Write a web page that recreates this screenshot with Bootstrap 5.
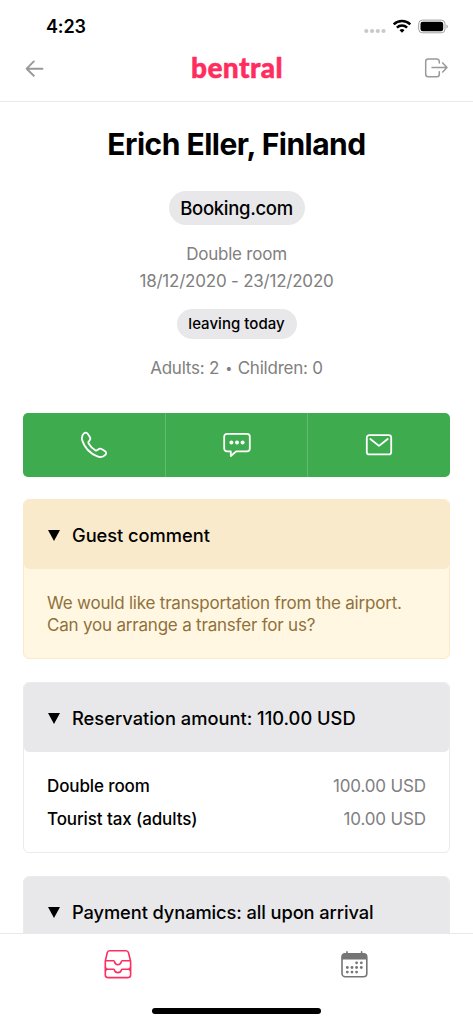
<!DOCTYPE html>
<html lang="en">
<head>
<meta charset="utf-8">
<meta name="viewport" content="width=device-width, initial-scale=1">
<title>bentral</title>
<link href="https://cdn.jsdelivr.net/npm/bootstrap@5.3.0/dist/css/bootstrap.min.css" rel="stylesheet">
<style>
  body { font-family: Inter, "Liberation Sans", sans-serif; color: #000; background: #fff; font-size: 17px; line-height: 27px; letter-spacing: -.22px; }
  svg { display: block; flex: none; }
  .status-bar { height: 50px; padding: 3px 24px 0 46px; }
  .clock { font-size: 18px; font-weight: 600; letter-spacing: -.15px; }
  .app-header { height: 52px; padding: 0 25px 15px; border-bottom: 1px solid #e9e9eb; }
  .brand { font-family: Lato, sans-serif; font-weight: 900; font-size: 28px; color: #ff2d5f; letter-spacing: .4px; line-height: 34px; padding: 0 0 3px 5px; -webkit-text-stroke: .5px #ff2d5f; }
  .guest-name { font-size: 30px; font-weight: 700; line-height: 36px; letter-spacing: -.52px; margin: 24px 0 29px; }
  .pill { background: #e8e8ea; border-radius: 18px; font-weight: 500; }
  .pill-channel { font-size: 18.5px; line-height: 34px; width: 136px; letter-spacing: -.3px; margin-bottom: 16px; }
  .pill-stay { font-size: 15px; line-height: 30px; width: 120px; letter-spacing: .03px; margin: 14px 0 16px; }
  .soft { color: #808080; }
  .dot { display: inline-block; transform: scale(.75); }
  .contact-bar { height: 64px; background: #3fab4f; border-radius: 5px; margin: 31px 23px 0; }
  .contact-bar a + a { border-left: 1px solid #62bb6f; }
  .panel { border: 1px solid #ebebed; border-radius: 6px; margin: 23px 23px 0; }
  .panel-top { height: 69px; background: #e8e8ea; border-radius: 5px; padding: 1px 0 0 24px; gap: 12px; font-size: 18.3px; font-weight: 500; letter-spacing: -.1px; }
  .panel-top.with-total { letter-spacing: 0; }
  .panel-note { border-color: #fbe9c8; background: #fff7e2; margin-top: 22px; }
  .panel-note .panel-top { background: #faeacc; letter-spacing: -.04px; }
  .note-text { color: #8f713c; line-height: 22px; padding: 23px 23px 22px; letter-spacing: -.2px; }
  .amounts { padding: 18px 23px 16px; line-height: 33px; }
  .amounts .label { font-weight: 500; letter-spacing: -.11px; }
  .amounts .soft { letter-spacing: -.14px; }
  .tabs-bottom { height: 91px; border-top: 1px solid #e9e9eb; background: #fff; }
  .tab-row { height: 60px; }
  .home-line { width: 169px; height: 6px; border-radius: 3px; background: #000; margin-top: 14px; }
</style>
</head>
<body>
<div class="vh-100 d-flex flex-column overflow-hidden">
  <div class="status-bar d-flex align-items-center justify-content-between flex-shrink-0">
    <span class="clock">4:23</span>
    <svg width="85" height="16" viewBox="0 0 85 16">
      <g fill="#c9c9c9"><circle cx="2.3" cy="12" r="2.1"/><circle cx="8.1" cy="12" r="2.1"/><circle cx="13.8" cy="12" r="2.1"/><circle cx="19.5" cy="12" r="2.1"/></g>
      <g fill="none" stroke="#000" stroke-width="2.5"><path d="M29.7 5.300a12.300 12.300 0 0 1 16.600 0"/><path d="M32.900 8.600a7.400 7.400 0 0 1 10.200 0"/></g>
      <path d="M35.500 11.200a3.600 3.600 0 0 1 5 0L38 13.800z"/>
      <rect x="54.700" y="1.100" width="26.300" height="12.700" rx="3.700" fill="none" stroke="#a0a0a0"/>
      <rect x="56.500" y="2.800" width="22.700" height="9.400" rx="2.200"/>
      <path d="M82.500 5.400c1.700.6 1.700 3.500 0 4.200z" fill="#999"/>
    </svg>
  </div>
  <header class="app-header d-flex align-items-center justify-content-between flex-shrink-0">
    <svg width="20" height="18" viewBox="0 0 20 18" fill="none" stroke="#999" stroke-width="1.9" stroke-linecap="round" stroke-linejoin="round"><path d="M17.500 9.700H1.700M8.800 2.400 1.700 9.700l7.100 7"/></svg>
    <div class="brand">bentral</div>
    <svg width="24" height="20" viewBox="0 0 24 20" fill="none" stroke="#999" stroke-width="1.5" stroke-linecap="round" stroke-linejoin="round"><path d="M15.300 5V3.500a2.500 2.500 0 0 0-2.500-2.500H4.200A2.500 2.500 0 0 0 1.700 3.500v12.700a2.500 2.500 0 0 0 2.500 2.500h8.600a2.500 2.500 0 0 0 2.500-2.500v-2.400M8 9.500h15M18.700 4.900 23 9.500l-4.300 4.500"/></svg>
  </header>

  <main class="flex-grow-1 overflow-hidden">
    <div class="d-flex flex-column align-items-center text-center">
      <h1 class="guest-name">Erich Eller, Finland</h1>
      <div class="pill pill-channel">Booking.com</div>
      <div class="soft">Double room</div>
      <div class="soft">18/12/2020 - 23/12/2020</div>
      <div class="pill pill-stay">leaving today</div>
      <div class="soft">Adults: 2 <span class="dot">•</span> Children: 0</div>
    </div>

    <div class="contact-bar d-flex">
      <a href="#" class="flex-fill w-100 d-flex align-items-center justify-content-center">
        <svg width="28" height="28" viewBox="-.7 -.5 28 28" fill="none" stroke="#fff" stroke-width="1.800" stroke-linejoin="round"><path d="M3.200 1.900C4.500.7 6 .9 7 2.200c1 1.400 1.800 2.600 2.500 4.100.5 1.200 0 2-1 3-1 .9-1.100 1.800-.4 3 1.600 2.700 3.600 4.700 6.200 6.300 1.200.7 2.100.6 3-.4 1-1 1.900-1.500 3-.9 1.400.7 2.800 1.500 4.100 2.500 1.300 1 1.400 2.400.2 3.600-2.200 2.300-4.800 2.700-7.900 1.500C9.500 22 3.900 16.100 1.700 9.400.8 6.400 1 3.900 3.200 1.900z"/></svg>
      </a>
      <a href="#" class="flex-fill w-100 d-flex align-items-center justify-content-center">
        <svg width="28" height="26" viewBox="0 0 28 26"><path d="M4 1.800h20a2.800 2.800 0 0 1 2.800 2.800v12A2.800 2.800 0 0 1 24 19.400H13.200L7.800 24v-4.600H4a2.800 2.800 0 0 1-2.800-2.800v-12A2.800 2.800 0 0 1 4 1.800z" fill="none" stroke="#fff" stroke-width="1.800" stroke-linejoin="round"/><g fill="#fff"><circle cx="8.400" cy="10.600" r="2"/><circle cx="14" cy="10.600" r="2"/><circle cx="19.600" cy="10.600" r="2"/></g></svg>
      </a>
      <a href="#" class="flex-fill w-100 d-flex align-items-center justify-content-center">
        <svg width="28" height="22" viewBox="0 .3 28 22" fill="none" stroke="#fff" stroke-width="1.800" stroke-linecap="round" stroke-linejoin="round"><rect x="1.800" y="1.500" width="24.400" height="19.200" rx="2.500"/><path d="m5.300 5.300 8.700 6.900 8.700-6.900"/></svg>
      </a>
    </div>

    <section class="panel panel-note">
      <div class="panel-top d-flex align-items-center">
        <svg width="12" height="11" viewBox="0 0 12 11"><path d="M0 0h12L6 11z"/></svg>
        <span>Guest comment</span>
      </div>
      <div class="note-text">We would like transportation from the airport.<br>Can you arrange a transfer for us?</div>
    </section>

    <section class="panel">
      <div class="panel-top with-total d-flex align-items-center">
        <svg width="12" height="11" viewBox="0 0 12 11"><path d="M0 0h12L6 11z"/></svg>
        <span>Reservation amount: 110.00 USD</span>
      </div>
      <div class="amounts">
        <div class="d-flex justify-content-between"><span class="label">Double room</span><span class="soft">100.00 USD</span></div>
        <div class="d-flex justify-content-between"><span class="label">Tourist tax (adults)</span><span class="soft">10.00 USD</span></div>
      </div>
    </section>

    <section class="panel">
      <div class="panel-top d-flex align-items-center">
        <svg width="12" height="11" viewBox="0 0 12 11"><path d="M0 0h12L6 11z"/></svg>
        <span>Payment dynamics: all upon arrival</span>
      </div>
    </section>
  </main>

  <nav class="tabs-bottom d-flex flex-column align-items-center flex-shrink-0">
    <div class="tab-row d-flex w-100">
      <a href="#" class="flex-fill w-50 d-flex align-items-center justify-content-center">
        <svg width="28" height="30" viewBox="0 -.3 28 30" fill="none" stroke="#ff2d5f" stroke-width="1.600" stroke-linejoin="round"><path d="M5.700 1.500h16.200c1.400 0 2.300.8 2.600 2l2.100 8.300v14a2.500 2.500 0 0 1-2.500 2.500H3.800a2.500 2.500 0 0 1-2.500-2.500v-14l1.900-8.300c.3-1.200 1.200-2 2.500-2z"/><path d="M1.300 11.400h8.300c.5 0 .8.400.9.900.4 2 1.600 3.100 3.400 3.100s3-1.100 3.400-3.100c.1-.5.400-.9.900-.9h8.400M1.300 17.800c.3 1.300 1.200 2.100 2.500 2.100h5.700c.5 0 .8.300.9.800.5 1.700 1.700 2.600 3.500 2.600s3-.9 3.500-2.600c.1-.5.400-.8.900-.8h5.800c1.300 0 2.200-.8 2.500-2.100M1.300 22c.3-1.300 1.200-2.100 2.500-2.100M26.600 22c-.3-1.300-1.200-2.100-2.500-2.100"/></svg>
      </a>
      <a href="#" class="flex-fill w-50 d-flex align-items-center justify-content-center">
        <svg width="28" height="28" viewBox=".7 -.8 28 28"><path d="M6.700 1v3M21.300 1v3" stroke="#757575" stroke-width="1.600" stroke-linecap="round"/><rect x="1.700" y="3.100" width="24.800" height="22.800" rx="3.300" fill="none" stroke="#757575" stroke-width="1.600"/><path d="M1.500 8.800V6.300A3.500 3.500 0 0 1 5 2.800h18.200a3.500 3.500 0 0 1 3.500 3.500v2.500z" fill="#757575"/><g fill="#757575"><circle cx="16.300" cy="12" r="1.400"/><circle cx="21" cy="12" r="1.400"/><circle cx="7" cy="16.700" r="1.400"/><circle cx="11.700" cy="16.700" r="1.400"/><circle cx="16.300" cy="16.700" r="1.400"/><circle cx="21" cy="16.700" r="1.400"/><circle cx="7" cy="21.300" r="1.400"/><circle cx="11.700" cy="21.300" r="1.400"/><circle cx="16.300" cy="21.300" r="1.400"/></g></svg>
      </a>
    </div>
    <div class="home-line"></div>
  </nav>
</div>
<script src="https://cdn.jsdelivr.net/npm/bootstrap@5.3.0/dist/js/bootstrap.bundle.min.js"></script>
</body>
</html>
